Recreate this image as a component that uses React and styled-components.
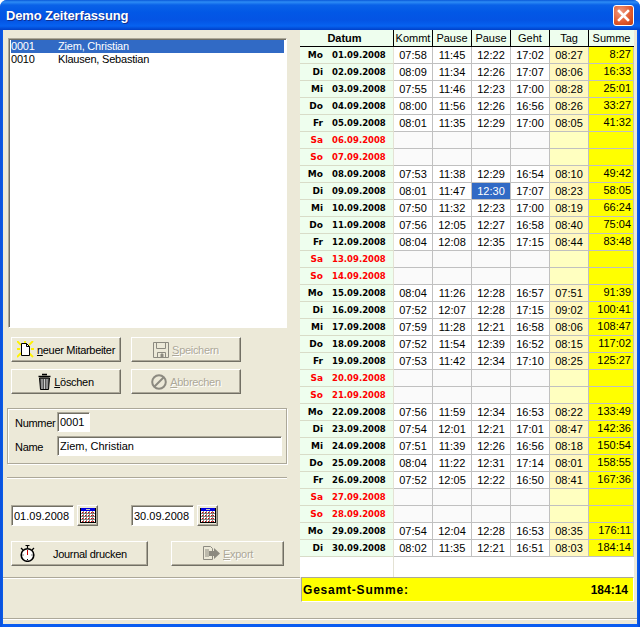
import React from "react";
import styled, { createGlobalStyle } from "styled-components";

const GlobalStyle = createGlobalStyle`
  html, body {
    margin: 0;
    padding: 0;
    background: #fff;
  }
`;

const days = [
  ["Mo", "01", "07:58", "11:45", "12:22", "17:02", "08:27", "8:27"],
  ["Di", "02", "08:09", "11:34", "12:26", "17:07", "08:06", "16:33"],
  ["Mi", "03", "07:55", "11:46", "12:23", "17:00", "08:28", "25:01"],
  ["Do", "04", "08:00", "11:56", "12:26", "16:56", "08:26", "33:27"],
  ["Fr", "05", "08:01", "11:35", "12:29", "17:00", "08:05", "41:32"],
  ["Sa", "06"],
  ["So", "07"],
  ["Mo", "08", "07:53", "11:38", "12:29", "16:54", "08:10", "49:42"],
  ["Di", "09", "08:01", "11:47", "12:30", "17:07", "08:23", "58:05"],
  ["Mi", "10", "07:50", "11:32", "12:23", "17:00", "08:19", "66:24"],
  ["Do", "11", "07:56", "12:05", "12:27", "16:58", "08:40", "75:04"],
  ["Fr", "12", "08:04", "12:08", "12:35", "17:15", "08:44", "83:48"],
  ["Sa", "13"],
  ["So", "14"],
  ["Mo", "15", "08:04", "11:26", "12:28", "16:57", "07:51", "91:39"],
  ["Di", "16", "07:52", "12:07", "12:28", "17:15", "09:02", "100:41"],
  ["Mi", "17", "07:59", "11:28", "12:21", "16:58", "08:06", "108:47"],
  ["Do", "18", "07:52", "11:54", "12:39", "16:52", "08:15", "117:02"],
  ["Fr", "19", "07:53", "11:42", "12:34", "17:10", "08:25", "125:27"],
  ["Sa", "20"],
  ["So", "21"],
  ["Mo", "22", "07:56", "11:59", "12:34", "16:53", "08:22", "133:49"],
  ["Di", "23", "07:54", "12:01", "12:21", "17:01", "08:47", "142:36"],
  ["Mi", "24", "07:51", "11:39", "12:26", "16:56", "08:18", "150:54"],
  ["Do", "25", "08:04", "11:22", "12:31", "17:14", "08:01", "158:55"],
  ["Fr", "26", "07:52", "12:05", "12:22", "16:50", "08:41", "167:36"],
  ["Sa", "27"],
  ["So", "28"],
  ["Mo", "29", "07:54", "12:04", "12:28", "16:53", "08:35", "176:11"],
  ["Di", "30", "08:02", "11:35", "12:21", "16:51", "08:03", "184:14"],
];

const NewIcon = () => (
  <svg width="17" height="17" viewBox="0 0 17 17">
    <path d="M0 0l4 4M16 0l-4 4M0 8h3M14 8h3M0 16l4-4M16 16l-4-4M8 0v2" stroke="#fff200" strokeWidth="1.800" />
    <path d="M4.500 2.500h5l3 3v9h-8z" fill="#fff" stroke="#000" />
    <path d="M9.500 2.500v3h3" fill="none" stroke="#000" />
  </svg>
);

const DiskIcon = () => (
  <svg width="16" height="16" viewBox="0 0 16 16" fill="none" stroke="#8c8a80">
    <path d="M.5.5h15v15H.5z" />
    <path d="M3.500.5v6h9v-6M4.500 15.500v-5h8v5" />
    <path d="M8 12h2v3H8z" fill="#8c8a80" />
  </svg>
);

const TrashIcon = () => (
  <svg width="13" height="17" viewBox="0 0 13 17">
    <path d="M4 1.500h5M.5 3.500h12" stroke="#000" strokeWidth="1.500" />
    <path d="M1.500 5h10l-1 11.500h-8z" fill="#555" stroke="#000" />
    <path d="M4 6v10M6.500 6v10M9 6v10" stroke="#ccc" />
  </svg>
);

const NoIcon = () => (
  <svg width="16" height="16" viewBox="0 0 16 16" fill="none" stroke="#8c8a80" strokeWidth="2">
    <circle cx="8" cy="8" r="6.800" />
    <path d="M3.500 12.500l9-9" />
  </svg>
);

const WatchIcon = () => (
  <svg width="17" height="17" viewBox="0 0 17 17" fill="none" stroke="#000">
    <path d="M6.500.5h4M8.500 1v2M2 3l2 2M15 3l-2 2" strokeWidth="1.200" />
    <circle cx="8.500" cy="10" r="6.300" fill="#fff" strokeWidth="1.600" />
    <path d="M8.500 5v5" stroke="#d00000" />
    <path d="M8.500 14v1M3.500 10h1M12.500 10h1" />
  </svg>
);

const ExportIcon = () => (
  <svg width="17" height="15" viewBox="0 0 17 15">
    <path d="M.5.5h7l2 2v11h-9z" fill="#ece9d8" stroke="#8c8a80" />
    <path d="M2 4h4M2 6h4M2 8h4M2 10h4" stroke="#8c8a80" />
    <path d="M6 5h5V2l6 5.500-6 5.500V10H6z" fill="#8c8a80" />
  </svg>
);

const CalendarIcon = () => (
  <svg width="16" height="15" viewBox="0 0 16 15" shapeRendering="crispEdges">
    <rect x="0" y="0" width="16" height="15" fill="#000" />
    <rect x="1" y="0" width="14" height="3" fill="#0000e0" />
    <rect x="6" y="1" width="4" height="1" fill="#c0c0c0" />
    <rect x="1" y="3" width="14" height="11" fill="#fff" />
    {[5, 8, 11].map((y) => (
      <rect key={y} x="1" y={y} width="14" height="1" fill="#808080" />
    ))}
    {[3, 6, 9, 12].map((x) => (
      <rect key={x} x={x} y="3" width="1" height="11" fill="#808080" />
    ))}
    {[4, 7, 10, 13].map((y) =>
      [2, 5, 8, 11, 13].map((x) => (
        <rect key={`${x}-${y}`} x={x} y={y} width="1" height="1" fill="#e00000" />
      ))
    )}
  </svg>
);

const CloseIcon = () => (
  <svg width="13" height="13" viewBox="0 0 13 13">
    <path d="M2 2l9 9M11 2l-9 9" stroke="#fff" strokeWidth="2.600" strokeLinecap="square" />
  </svg>
);

const App = () => {
  return (
    <>
      <GlobalStyle />
      <Window>
        <TitleBar>
          <Title>Demo Zeiterfassung</Title>
          <CloseButton>
            <CloseIcon />
          </CloseButton>
        </TitleBar>
        <Content>
          <Columns>
            <LeftPane>
              <ListBox>
                <ListRow $selected>
                  <span>0001</span>
                  <span>Ziem, Christian</span>
                </ListRow>
                <ListRow>
                  <span>0010</span>
                  <span>Klausen, Sebastian</span>
                </ListRow>
              </ListBox>

              <ButtonRow $top={9}>
                <Button>
                  <NewIcon />
                  <span>
                    <u>n</u>euer Mitarbeiter
                  </span>
                </Button>
                <Button $disabled>
                  <DiskIcon />
                  <span>
                    <u>S</u>peichern
                  </span>
                </Button>
              </ButtonRow>
              <ButtonRow $top={7}>
                <Button>
                  <TrashIcon />
                  <span>
                    <u>L</u>öschen
                  </span>
                </Button>
                <Button $disabled>
                  <NoIcon />
                  <span>
                    <u>A</u>bbrechen
                  </span>
                </Button>
              </ButtonRow>

              <GroupBox>
                <FieldRow>
                  <FieldLabel>Nummer</FieldLabel>
                  <Field $width={33} value="0001" readOnly />
                </FieldRow>
                <FieldRow>
                  <FieldLabel>Name</FieldLabel>
                  <Field $width={225} value="Ziem, Christian" readOnly />
                </FieldRow>
              </GroupBox>

              <Separator />

              <DateRow>
                <DateGroup>
                  <Field $width={63} $height={21} value="01.09.2008" readOnly />
                  <CalendarButton>
                    <CalendarIcon />
                  </CalendarButton>
                </DateGroup>
                <DateGroup>
                  <Field $width={63} $height={21} value="30.09.2008" readOnly />
                  <CalendarButton>
                    <CalendarIcon />
                  </CalendarButton>
                </DateGroup>
              </DateRow>

              <ActionRow>
                <ActionButton $width={137}>
                  <WatchIcon />
                  <span>Journal drucken</span>
                </ActionButton>
                <ActionButton $width={113} $disabled>
                  <ExportIcon />
                  <span>
                    <u>E</u>xport
                  </span>
                </ActionButton>
              </ActionRow>

              <PaneRule />
            </LeftPane>

            <RightPane>
              <Grid>
                <HeaderRow>
                  <HeaderCell $bold>Datum</HeaderCell>
                  <HeaderCell>Kommt</HeaderCell>
                  <HeaderCell>Pause</HeaderCell>
                  <HeaderCell>Pause</HeaderCell>
                  <HeaderCell>Geht</HeaderCell>
                  <HeaderCell>Tag</HeaderCell>
                  <HeaderCell>Summe</HeaderCell>
                </HeaderRow>
                {days.map(([day, date, kommt, pause1, pause2, geht, tag, summe]) => {
                  const weekend = !kommt;
                  const selected = date === "09";
                  return (
                    <Row key={date}>
                      <DateCell $weekend={weekend}>
                        <DayName>{day}</DayName>
                        <span>{date}.09.2008</span>
                      </DateCell>
                      <TimeCell $weekend={weekend}>{kommt}</TimeCell>
                      <TimeCell $weekend={weekend}>{pause1}</TimeCell>
                      <TimeCell $weekend={weekend} $selected={selected}>
                        {pause2}
                      </TimeCell>
                      <TimeCell $weekend={weekend}>{geht}</TimeCell>
                      <TagCell $weekend={weekend}>{tag}</TagCell>
                      <SumCell>{summe}</SumCell>
                    </Row>
                  );
                })}
                <GridRest />
              </Grid>
              <TotalBar>
                <TotalLabel>Gesamt-Summe:</TotalLabel>
                <span>184:14</span>
              </TotalBar>
            </RightPane>
          </Columns>
          <StatusStrip />
        </Content>
      </Window>
    </>
  );
};

const Window = styled.div`
  width: 640px;
  height: 627px;
  display: flex;
  flex-direction: column;
  box-sizing: border-box;
  padding: 0 3px 3px;
  background: linear-gradient(90deg, #0f4fe0 0, #0855dd 1.5px, #0a5cf0 3px, #0a5cf0 637px, #0046d5 640px);
  border-radius: 7px 7px 0 0;
  font-family: "Liberation Sans", Arial, sans-serif;
  font-size: 11px;
  color: #000;
  overflow: hidden;
`;

const TitleBar = styled.div`
  height: 30px;
  flex: none;
  margin: 0 -3px;
  padding: 0 6px;
  display: flex;
  align-items: center;
  justify-content: space-between;
  background: linear-gradient(
    180deg,
    #0a58d8 0,
    #2d8cf5 2px,
    #0a62e8 5px,
    #0258e6 12px,
    #0454e4 20px,
    #0662f0 26px,
    #0040c8 30px
  );
`;

const Title = styled.div`
  color: #fff;
  font-size: 13px;
  font-weight: bold;
  letter-spacing: -0.15px;
  text-shadow: 1px 1px 0 #0f2f90;
`;

const CloseButton = styled.div`
  width: 21px;
  height: 21px;
  display: flex;
  align-items: center;
  justify-content: center;
  box-sizing: border-box;
  border: 1px solid #fff;
  border-radius: 3px;
  background: radial-gradient(circle at 35% 30%, #f09a80, #e0582c 60%, #c03c10);
`;

const Content = styled.div`
  flex: 1;
  display: flex;
  flex-direction: column;
  background: #ece9d8;
`;

const Columns = styled.div`
  flex: 1;
  display: flex;
`;

const LeftPane = styled.div`
  width: 297px;
  flex: none;
  box-sizing: border-box;
  padding: 8px 0 0 0;
  display: flex;
  flex-direction: column;
`;

const ListBox = styled.div`
  width: 279px;
  height: 290px;
  margin-left: 5px;
  box-sizing: border-box;
  padding: 1px 2px;
  background: #fff;
  border: 1px solid;
  border-color: #aca899 #fff #fff #aca899;
  box-shadow: inset 1px 1px 0 #716f64;
`;

const ListRow = styled.div`
  height: 13px;
  line-height: 13px;
  display: grid;
  grid-template-columns: 47px 1fr;
  letter-spacing: -0.2px;
  background: ${(p) => (p.$selected ? "#316ac5" : "transparent")};
  color: ${(p) => (p.$selected ? "#fff" : "#000")};
`;

const ButtonRow = styled.div`
  display: flex;
  gap: 10px;
  margin: ${(p) => p.$top}px 0 0 8px;
`;

const Button = styled.div`
  width: 110px;
  height: 25px;
  box-sizing: border-box;
  display: flex;
  align-items: center;
  justify-content: center;
  gap: 3px;
  letter-spacing: -0.3px;
  background: #ece9d8;
  border: 1px solid;
  border-color: #fff #716f64 #716f64 #fff;
  box-shadow: inset -1px -1px 0 #aca899;
  color: ${(p) => (p.$disabled ? "#aca899" : "#000")};
  text-shadow: ${(p) => (p.$disabled ? "1px 1px 0 #fff" : "none")};
`;

const GroupBox = styled.div`
  width: 280px;
  height: 56px;
  margin: 14px 0 0 4px;
  box-sizing: border-box;
  padding: 3px 0 0 49px;
  border: 1px solid #aca899;
  box-shadow: 1px 1px 0 #fff, inset 1px 1px 0 #fff;
  display: flex;
  flex-direction: column;
  gap: 4px;
`;

const FieldRow = styled.div`
  position: relative;
  display: flex;
  align-items: center;
`;

const FieldLabel = styled.label`
  position: absolute;
  left: -42px;
  top: 5px;
  letter-spacing: -0.3px;
`;

const Field = styled.input`
  width: ${(p) => p.$width}px;
  height: ${(p) => p.$height || 20}px;
  box-sizing: border-box;
  padding: 0 2px;
  margin: 0;
  outline: none;
  font: inherit;
  color: #000;
  background: #fff;
  border: 1px solid;
  border-color: #aca899 #fff #fff #aca899;
  box-shadow: inset 1px 1px 0 #716f64;
`;

const Separator = styled.div`
  height: 1px;
  margin: 13px 0 0 4px;
  width: 280px;
  background: #aca899;
  box-shadow: 0 1px 0 #fff;
`;

const DateRow = styled.div`
  display: flex;
  gap: 33px;
  margin: 27px 0 0 8px;
`;

const DateGroup = styled.div`
  display: flex;
  gap: 3px;
`;

const CalendarButton = styled.div`
  width: 21px;
  height: 21px;
  box-sizing: border-box;
  display: flex;
  align-items: center;
  justify-content: center;
  background: #ece9d8;
  border: 1px solid;
  border-color: #fff #716f64 #716f64 #fff;
  box-shadow: inset -1px -1px 0 #aca899;
`;

const ActionRow = styled.div`
  display: flex;
  gap: 23px;
  margin: 15px 0 0 8px;
`;

const ActionButton = styled(Button)`
  width: ${(p) => p.$width}px;
  justify-content: flex-start;
  gap: ${(p) => (p.$disabled ? 3 : 17)}px;
  padding-left: ${(p) => (p.$disabled ? 31 : 7)}px;
`;

const PaneRule = styled.div`
  height: 1px;
  margin-top: 11px;
  background: #aca899;
  box-shadow: 0 1px 0 #fff;
`;

const RightPane = styled.div`
  width: 337px;
  flex: none;
  display: flex;
  flex-direction: column;
`;

const Grid = styled.div`
  width: 334px;
  height: 547px;
  display: flex;
  flex-direction: column;
  background: #fff;
`;

const HeaderRow = styled.div`
  height: 17px;
  flex: none;
  box-sizing: border-box;
  display: grid;
  grid-template-columns: 94px repeat(5, 39px) 45px;
  border-bottom: 1px solid #000;
  background: #eefeee;
`;

const HeaderCell = styled.div`
  box-sizing: border-box;
  line-height: 16px;
  text-align: center;
  font-weight: ${(p) => (p.$bold ? "bold" : "normal")};
  padding-right: ${(p) => (p.$bold ? 4 : 0)}px;
  border-right: 1px solid #000;

  &:last-child {
    border-right: none;
  }
`;

const Row = styled.div`
  height: 17px;
  flex: none;
  display: grid;
  grid-template-columns: 94px repeat(5, 39px) 45px;
`;

const Cell = styled.div`
  box-sizing: border-box;
  line-height: 16px;
  border-right: 1px solid #c0c0c0;
  border-bottom: 1px solid #c0c0c0;
`;

const DateCell = styled(Cell)`
  display: grid;
  grid-template-columns: 23px 1fr;
  column-gap: 9px;
  font-family: "DejaVu Sans", Verdana, sans-serif;
  font-weight: bold;
  font-size: 8.5px;
  background: #eefeee;
  color: ${(p) => (p.$weekend ? "#ff0000" : "#000")};
  border-right-color: #e4e2d4;
  border-bottom-color: #d8dcc8;
`;

const DayName = styled.span`
  text-align: right;
  font-size: 9px;
`;

const TimeCell = styled(Cell)`
  text-align: center;
  background: ${(p) => (p.$selected ? "#316ac5" : p.$weekend ? "#fafafa" : "#fff")};
  color: ${(p) => (p.$selected ? "#fff" : "#000")};
`;

const TagCell = styled(Cell)`
  text-align: center;
  background: ${(p) => (p.$weekend ? "#ffffc0" : "#fff8c0")};
`;

const SumCell = styled(Cell)`
  text-align: right;
  line-height: 14px;
  padding-right: 2px;
  background: #ffff00;
`;

const GridRest = styled.div`
  flex: 1;
  width: 94px;
  box-sizing: border-box;
  border-right: 1px solid #e4e2d4;
`;

const TotalBar = styled.div`
  width: 333px;
  height: 25px;
  margin-left: 1px;
  box-sizing: border-box;
  padding: 0 5px 0 1px;
  display: flex;
  align-items: center;
  justify-content: space-between;
  background: #ffff00;
  font-size: 12px;
  font-weight: bold;
  border: 1px solid;
  border-color: #aca899 #fff #fff #aca899;
`;

const TotalLabel = styled.span`
  letter-spacing: 0.8px;
`;

const StatusStrip = styled.div`
  height: 6px;
  flex: none;
  border-top: 1px solid #aca899;
  box-sizing: border-box;
  box-shadow: inset 0 1px 0 #fff;
`;

export default App;
